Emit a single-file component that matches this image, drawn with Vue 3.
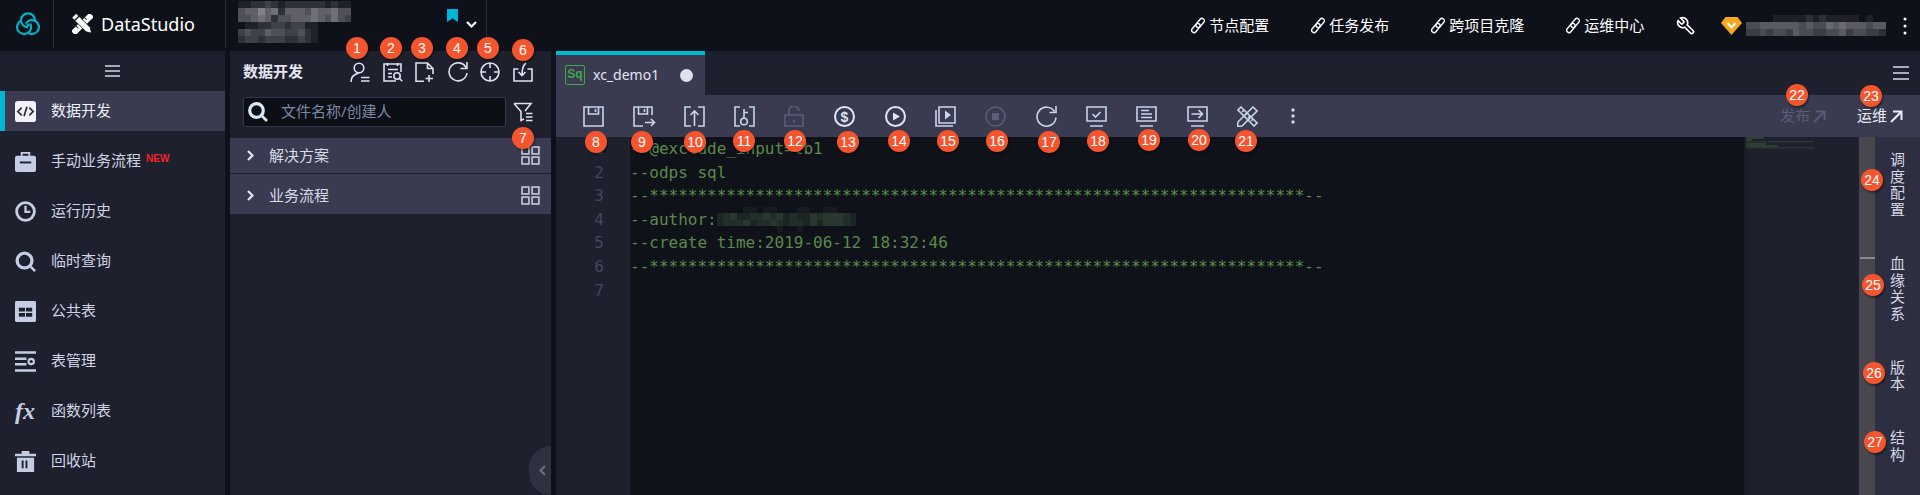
<script setup>
const navItems = [
  { label: '数据开发', icon: 'code', active: true },
  { label: '手动业务流程', icon: 'case', isNew: true },
  { label: '运行历史', icon: 'clock' },
  { label: '临时查询', icon: 'search' },
  { label: '公共表', icon: 'table' },
  { label: '表管理', icon: 'manage' },
  { label: '函数列表', icon: 'fx' },
  { label: '回收站', icon: 'trash' }
]
const links = ['节点配置', '任务发布', '跨项目克隆', '运维中心']
const sections = ['解决方案', '业务流程']
const sideTabs = ['调度配置', '血缘关系', '版本', '结构']
const stars = '*'.repeat(68)
const codeLines = [
  '--@exclude_input=tb1',
  '--odps sql',
  '--' + stars + '--',
  '--author:',
  '--create time:2019-06-12 18:32:46',
  '--' + stars + '--',
  ''
]
const badges = [
  [1, 357, 48], [2, 391, 48], [3, 422, 48], [4, 457, 48], [5, 488, 48], [6, 523, 50], [7, 523, 138],
  [8, 596, 142], [9, 642, 142], [10, 695, 142], [11, 744, 141], [12, 795, 141], [13, 848, 142],
  [14, 899, 141], [15, 948, 141], [16, 997, 141], [17, 1049, 142], [18, 1098, 141], [19, 1149, 140],
  [20, 1199, 140], [21, 1246, 141], [22, 1797, 95], [23, 1871, 96], [24, 1872, 180], [25, 1873, 285],
  [26, 1874, 373], [27, 1875, 442]
].map(([n, x, y]) => ({ n, left: x - 11 + 'px', top: y - 11 + 'px' }))

function mosaic(rows, base, tint) {
  return rows.flatMap(r => r.split('').map(ch => {
    const v = Number(ch) / 9
    const c = base.map((b, i) => Math.round(b + (tint[i] - b) * v))
    return `rgb(${c[0]},${c[1]},${c[2]})`
  }))
}
const gray = [14, 17, 25]
const projectCells = mosaic([
  '11223212222221211',
  '45575625554655644',
  '44565244555654643',
  '01122332331100000',
  '34335443342100000',
  '23323332232100000'
], gray, [160, 160, 165])
const userCells = mosaic([
  '000011111212111110100',
  '445555554544656555455',
  '334344354433445344332'
], gray, [150, 150, 155])
const authorCells = mosaic([
  '0000110110001100110000',
  '2342233434232243444320',
  '2333423343233242444320',
  '0000000001001000000000'
], gray, [75, 105, 72])
</script>

<template>
  <div class="app">
    <header class="topbar">
      <div class="logo-cell">
        <svg class="logo" viewBox="0 0 24 24" fill="none" stroke="#00b2cc" stroke-width="2.2">
          <g id="lobes">
            <path d="M12 15.300A7 7 0 1 1 19 8.300" />
            <path transform="rotate(120 12 12.800)" d="M12 15.300A7 7 0 1 1 19 8.300" />
            <path transform="rotate(240 12 12.800)" d="M12 15.300A7 7 0 1 1 19 8.300" />
          </g>
          <circle cx="12" cy="12.800" r="1.600" fill="#00b2cc" stroke="none" />
        </svg>
      </div>
      <div class="brand-cell">
        <svg class="brand-icon" viewBox="0 0 21 20">
          <g transform="rotate(45 10.5 10)">
            <rect x="7.5" y="-3" width="6" height="26" fill="#fff" />
            <path d="M7.5 4h3M7.5 8h3M7.5 12h3M7.5 16h3" stroke="#0e1119" stroke-width="1" />
          </g>
          <g transform="rotate(-45 10.5 10)">
            <path d="M7.5 -2h6v20l-3 5-3-5z" fill="#fff" stroke="#0e1119" stroke-width=".8" />
            <path d="M7.5 2h6" stroke="#0e1119" stroke-width="1.2" />
          </g>
        </svg>
        <span class="brand-name">DataStudio</span>
      </div>
      <div class="project-cell">
        <div class="mosaic project-mosaic">
          <i v-for="(c, i) in projectCells" :key="i" :style="{ background: c }"></i>
        </div>
        <svg class="bookmark" viewBox="0 0 11 13"><path d="M0 0h11v13L5.500 9.500 0 13z" fill="#00b4d8" /></svg>
        <svg class="proj-chevron" viewBox="0 0 11 7" fill="none" stroke="#fff" stroke-width="2.200"><path d="M1 1l4.500 4.500L10 1" /></svg>
      </div>
      <div class="top-right">
        <a v-for="l in links" :key="l" class="tlink">
          <svg class="clip" viewBox="0 0 14 18" fill="none" stroke="#fff" stroke-width="1.500">
            <g transform="rotate(40 7 9)">
              <rect x="4.500" y="0" width="5" height="11" rx="2.500" />
              <rect x="4.500" y="7" width="5" height="11" rx="2.500" />
            </g>
          </svg>
          <span class="tlink-text">{{ l }}</span>
        </a>
        <svg class="wrench" viewBox="0 0 24 24" fill="none" stroke="#fff" stroke-width="2">
          <path transform="translate(24 0) scale(-1 1)" d="M14.700 6.300a1 1 0 0 0 0 1.400l1.600 1.600a1 1 0 0 0 1.400 0l3.770-3.770a6 6 0 0 1-7.940 7.940l-6.910 6.910a2.120 2.120 0 0 1-3-3l6.910-6.910a6 6 0 0 1 7.940-7.940l-3.760 3.760z" />
        </svg>
        <svg class="gem" viewBox="0 0 21 18">
          <path d="M4.500 0h12L21 6 10.500 18 0 6z" fill="#f6a91f" />
          <path d="M6.500 6l4 4.500 4-4.500" fill="none" stroke="#fff" stroke-width="2" />
        </svg>
        <div class="mosaic user-mosaic">
          <i v-for="(c, i) in userCells" :key="i" :style="{ background: c }"></i>
        </div>
        <svg class="top-kebab" viewBox="0 0 4 18" fill="#fff">
          <circle cx="2" cy="2" r="1.500" /><circle cx="2" cy="9" r="1.500" /><circle cx="2" cy="16" r="1.500" />
        </svg>
      </div>
    </header>

    <div class="body">
      <nav class="nav">
        <div class="nav-head">
          <svg class="burger" viewBox="0 0 15 12" fill="none" stroke="#d4d8e6" stroke-width="1.600">
            <path d="M0 1h15M0 6h15M0 11h15" />
          </svg>
        </div>
        <ul class="nav-list">
          <li v-for="item in navItems" :key="item.label" class="nav-item" :class="{ active: item.active }">
            <span class="nav-icon">
              <svg v-if="item.icon === 'code'" viewBox="0 0 22 22">
                <rect width="22" height="22" rx="3" fill="#f0f2f8" />
                <path d="M7 7l-4 4 4 4M15 7l4 4-4 4M12.500 6l-3 10" fill="none" stroke="#2a2c3d" stroke-width="1.800" />
              </svg>
              <svg v-else-if="item.icon === 'case'" viewBox="0 0 22 22">
                <path d="M7 5V2h8v3" fill="none" stroke="#c5cde4" stroke-width="2" />
                <rect y="5" width="22" height="17" rx="2" fill="#c5cde4" />
                <path d="M5 12h12" stroke="#1e202d" stroke-width="2" />
              </svg>
              <svg v-else-if="item.icon === 'clock'" viewBox="0 0 22 22" fill="none" stroke="#c5cde4">
                <circle cx="11" cy="11" r="9.300" stroke-width="3" />
                <path d="M11 5v6.500h5" stroke-width="2.400" />
              </svg>
              <svg v-else-if="item.icon === 'search'" viewBox="0 0 22 22" fill="none" stroke="#c5cde4">
                <circle cx="10" cy="10" r="7.800" stroke-width="3.400" />
                <path d="M15.500 15.500l5.500 5.500" stroke-width="2.600" />
              </svg>
              <svg v-else-if="item.icon === 'table'" viewBox="0 0 22 22">
                <rect width="22" height="22" rx="1.500" fill="#c5cde4" />
                <path d="M4 7h6.500v4H4zM11.500 7H18v4h-6.500zM4 12.500h6.500v4H4zM11.500 12.500H18v4h-6.500z" fill="#1e202d" />
              </svg>
              <svg v-else-if="item.icon === 'manage'" viewBox="0 0 22 22" fill="none" stroke="#c5cde4">
                <path d="M0 1.500h22M0 20.500h22M0 8h12M0 14h12" stroke-width="2.600" />
                <circle cx="17" cy="11" r="2.800" stroke-width="2.200" />
              </svg>
              <span v-else-if="item.icon === 'fx'" class="fx">fx</span>
              <svg v-else viewBox="0 0 22 22">
                <path d="M0 3h22v2.500H0zM7 0h8v3H7z" fill="#c5cde4" />
                <path d="M2 7h18v15H2z" fill="#c5cde4" />
                <path d="M8 10v8M12 10v8M10 10v0" stroke="#1e202d" stroke-width="2" />
              </svg>
            </span>
            <span class="nav-label">{{ item.label }}</span>
            <span v-if="item.isNew" class="new-tag">NEW</span>
          </li>
        </ul>
      </nav>

      <section class="panel">
        <div class="panel-head">
          <h2 class="panel-title">数据开发</h2>
          <div class="panel-icons">
            <svg viewBox="0 0 20 20"><circle cx="9" cy="6" r="4.800" /><path d="M1 20c0-5 3.500-8 8-9M11 15.500h8.500M11 19h8.500" /></svg>
            <svg viewBox="0 0 20 20"><path d="M13 19H1V2h17v8M4.500 1v3M14.500 1v3M5 7.500h10M5 11.500h4M5 15h4" /><circle cx="14" cy="14" r="3.200" /><path d="M16.300 16.300l3 3" /></svg>
            <svg viewBox="0 0 20 20"><path d="M9 19.200H1V1h11.500L18 6.500v5.500M12.500 1v5.500H18M14 13v7M10.500 16.500h7.500" /></svg>
            <svg viewBox="0 0 20 20"><path d="M18 5.500A9 9 0 1 0 19 11M19 0v6.500h-6.500" /></svg>
            <svg viewBox="0 0 20 20"><circle cx="10" cy="10" r="9" /><path d="M10 1v5M10 14v5M1 10h5M14 10h5" /></svg>
            <svg viewBox="0 0 20 20"><path d="M5.500 7H1v12h18V7h-4.500M13 1c-3 2-4 5-4 12.500M5.500 10l3.500 3.500 3.500-3.500" /></svg>
          </div>
        </div>
        <div class="search-row">
          <div class="search-box">
            <svg class="search-ico" viewBox="0 0 20 20" fill="none" stroke="#d9e8f5">
              <circle cx="8.500" cy="8.500" r="6.800" stroke-width="3.200" />
              <path d="M13.500 13.500l5.500 5.500" stroke-width="2.600" />
            </svg>
            <span class="placeholder">文件名称/创建人</span>
          </div>
          <svg class="filter-ico" viewBox="0 0 20 20" fill="none" stroke="#dbe2f0" stroke-width="1.600">
            <path d="M1 1.500h17l-6 7.500M1 1.500l7 8v9l3-1.500M13 11.500h6.500M13 15h6.500M13 18.500h6.500" />
          </svg>
        </div>
        <div v-for="s in sections" :key="s" class="sec-row">
          <svg class="sec-chev" viewBox="0 0 7 11" fill="none" stroke="#e3e6f0" stroke-width="2.200"><path d="M1 1l4.500 4.500L1 10" /></svg>
          <span class="sec-label">{{ s }}</span>
          <svg class="sec-grid" viewBox="0 0 18 18" fill="none" stroke="#c0c4d6" stroke-width="1.600">
            <rect x="1" y="1" width="6.500" height="6.500" /><rect x="10.500" y="1" width="6.500" height="6.500" />
            <rect x="1" y="10.500" width="6.500" height="6.500" /><rect x="10.500" y="10.500" width="6.500" height="6.500" />
          </svg>
        </div>
        <div class="collapse-handle">
          <svg viewBox="0 0 7 11" fill="none" stroke="#6e7182" stroke-width="2"><path d="M6 1L1.500 5.500 6 10" /></svg>
        </div>
      </section>

      <main class="editor">
        <div class="tabstrip">
          <div class="tab">
            <span class="sq">Sq</span>
            <span class="tab-name">xc_demo1</span>
            <span class="tab-dot"></span>
          </div>
          <svg class="burger-right" viewBox="0 0 16 14" fill="none" stroke="#d4dcec" stroke-width="1.600">
            <path d="M0 1h16M0 7h16M0 13h16" />
          </svg>
        </div>
        <div class="toolbar">
          <svg viewBox="0 0 21 21"><path d="M1 1h19v19H1zM5.500 1v7h10V1M12.500 3v3" /></svg>
          <svg viewBox="0 0 21 21" class="wide"><path d="M19 9V1H1v19h9M5.500 1v7h9V1M11.500 3v3M12 16.500h9.500M18 13l3.500 3.500L18 20" /></svg>
          <svg viewBox="0 0 21 21"><path d="M7 1H1v19h6M14 1h6v19h-6M10.500 20V5M6.500 9l4-4 4 4" /></svg>
          <svg viewBox="0 0 21 21"><path d="M6 1H1v19h5M15 1h5v19h-5M10 12V3M10 6.500h4" /><circle cx="10" cy="15.500" r="3.300" /></svg>
          <svg viewBox="0 0 21 21" class="dim"><path d="M1 9h18v11H1zM5 9V5a5 5 0 0 1 10 0M10 13.500v3" /></svg>
          <svg viewBox="0 0 21 21" class="thick"><circle cx="10.500" cy="10.500" r="9.500" /><text x="10.500" y="15.500" text-anchor="middle" class="dollar">$</text></svg>
          <svg viewBox="0 0 21 21" class="thick"><circle cx="10.500" cy="10.500" r="9.500" /><path d="M8 6.500l7 4-7 4z" class="solid" /></svg>
          <svg viewBox="0 0 21 21"><path d="M1 4v16h17" /><path d="M4 1h16v16H4z" /><path d="M10 4.500l6 4.500-6 4.500z" class="solid" /></svg>
          <svg viewBox="0 0 21 21" class="dim"><circle cx="10.500" cy="10.500" r="9.500" /><path d="M7 7h7v7H7z" class="solid" /></svg>
          <svg viewBox="0 0 21 21"><path d="M18.500 5.500A9.500 9.500 0 1 0 20 11.500M20 0v6.500h-6.500" /></svg>
          <svg viewBox="0 0 21 21"><path d="M1 1h19v14H1zM4 20h13M6.500 8l3 3 5-5" /></svg>
          <svg viewBox="0 0 21 21"><path d="M1 1h19v14H1zM4 20h13M5 4.500h8M5 8h11M5 11.500h11" /></svg>
          <svg viewBox="0 0 21 21"><path d="M1 1h19v14H1zM4 20h13M4.500 8h11M11.500 4l4 4-4 4" /></svg>
          <svg viewBox="0 0 21 21"><path d="M4 1l16 16-3 3L1 4zM7 4l-2 2M10 7L8 9M13 10l-2 2M16 13l-2 2" /><path d="M16 1l4 4L5 20l-4.500 0.500L1 16z" /></svg>
          <svg class="tool-kebab" viewBox="0 0 12 16"><circle cx="6" cy="2" r="1.700" class="solid" /><circle cx="6" cy="8" r="1.700" class="solid" /><circle cx="6" cy="14" r="1.700" class="solid" /></svg>
          <div class="tool-right">
            <span class="tool-action disabled"><span class="ta-text">发布</span><svg viewBox="0 0 13 13"><path d="M1 12L11.500 1.500M3 1.500h8.500V10" /></svg></span>
            <span class="tool-action"><span class="ta-text">运维</span><svg viewBox="0 0 13 13"><path d="M1 12L11.500 1.500M3 1.500h8.500V10" /></svg></span>
          </div>
        </div>
        <div class="editor-body">
          <div class="gutter">
            <div v-for="(_, i) in codeLines" :key="i" class="ln">{{ i + 1 }}</div>
          </div>
          <div class="code">
            <div v-for="(line, i) in codeLines" :key="i" class="code-line">
              <span>{{ line }}</span>
              <div v-if="i === 3" class="mosaic author-mosaic">
                <i v-for="(c, j) in authorCells" :key="j" :style="{ background: c }"></i>
              </div>
            </div>
          </div>
          <div class="minimap">
            <svg viewBox="0 0 115 16" class="mini-svg">
              <path d="M2 1h18M2 3h6M2 7h20M2 9h32" stroke="#3f5f3b" stroke-width="1" />
              <path d="M2 4.800h68M2 10.800h68" stroke="#35493a" stroke-width=".8" />
            </svg>
          </div>
          <div class="scrollbar"><span class="scroll-mark"></span></div>
          <aside class="side">
            <div v-for="t in sideTabs" :key="t" class="side-tab">{{ t }}</div>
          </aside>
        </div>
      </main>
    </div>

    <span v-for="b in badges" :key="b.n" class="badge" :style="{ left: b.left, top: b.top }">{{ b.n }}</span>
  </div>
</template>

<style>
html, body { margin: 0; background: #0e1119; }
</style>

<style scoped>
.app {
  position: relative;
  width: 1920px;
  height: 495px;
  overflow: hidden;
  background: #0e1119;
  color: #d0d4e4;
  font-family: "Noto Sans", "Noto Sans CJK SC", sans-serif;
  font-size: 15px;
}
svg { display: block; }
.topbar { display: flex; align-items: center; height: 51px; background: #0e1119; }
.logo-cell { width: 54px; height: 48px; align-self: flex-start; border-right: 1px solid #2b2d3a; box-sizing: border-box; display: flex; align-items: center; justify-content: center; padding-left: 2px; }
.logo { width: 24px; height: 24px; }
.brand-cell { width: 172px; height: 48px; align-self: flex-start; border-right: 1px solid #2b2d3a; box-sizing: border-box; display: flex; align-items: center; padding-left: 18px; }
.brand-icon { width: 21px; height: 20px; flex: none; }
.brand-name { margin-left: 8px; font-size: 18px; color: #fff; }
.project-cell { width: 261px; height: 48px; align-self: flex-start; border-right: 1px solid #2b2d3a; box-sizing: border-box; display: flex; position: relative; padding-left: 12px; }
.mosaic { display: grid; flex: none; }
.mosaic i { display: block; }
.project-mosaic { grid-template-columns: repeat(17, 6.67px); grid-auto-rows: 7px; margin-top: 1px; height: 42px; }
.bookmark { width: 11px; height: 13px; margin-left: 96px; margin-top: 9px; flex: none; }
.proj-chevron { width: 11px; height: 7px; margin-left: 8px; margin-top: 21px; flex: none; }
.top-right { margin-left: auto; display: flex; align-items: center; padding-right: 13px; }
.tlink { display: flex; align-items: center; gap: 4px; color: #fff; font-size: 15px; margin-right: 42px; }
.tlink-text { margin-top: -2px; }
.tlink:last-of-type { margin-right: 0; }
.clip { width: 14px; height: 17px; flex: none; }
.wrench { width: 20px; height: 20px; margin-left: 32px; flex: none; }
.gem { width: 21px; height: 18px; margin-left: 25px; flex: none; }
.user-mosaic { grid-template-columns: repeat(21, 6.67px); grid-auto-rows: 7px; margin-left: 4px; }
.top-kebab { width: 4px; height: 18px; margin-left: 17px; flex: none; }

.body { display: flex; gap: 5px; height: 444px; }
.nav { width: 225px; background: #1e202d; flex: none; }
.nav-head { height: 40px; display: flex; align-items: center; justify-content: center; }
.burger { width: 15px; height: 12px; }
.nav-list { list-style: none; margin: 0; padding: 0; display: flex; flex-direction: column; gap: 10px; }
.nav-item { height: 40px; display: flex; align-items: center; padding-left: 14px; position: relative; }
.nav-item.active { background: #3a3b50; color: #eef0f7; }
.nav-item.active::before { content: ""; position: absolute; left: 0; top: 0; bottom: 0; width: 5px; background: #00b8d4; }
.nav-icon { width: 22px; height: 22px; flex: none; display: flex; align-items: center; justify-content: center; }
.nav-icon svg { width: 21px; height: 21px; }
.fx { font-family: "Liberation Serif", serif; font-style: italic; font-weight: 700; font-size: 24px; line-height: 22px; color: #c5cde4; }
.nav-label { margin-left: 15px; margin-top: -2px; font-size: 15px; line-height: 20px; }
.new-tag { font-family: "Liberation Sans", sans-serif; font-weight: 700; font-size: 10px; color: #f5222d; margin-left: 5px; margin-top: -6px; }

.panel { width: 321px; flex: none; background: #1e202d; position: relative; }
.panel-head { height: 42px; display: flex; align-items: center; padding: 0 18.5px 0 13px; }
.panel-title { margin: -3px 0 0; font-size: 15px; font-weight: 700; color: #e4e7f0; }
.panel-icons { margin-left: auto; display: flex; gap: 12.5px; }
.panel-icons svg { width: 20px; height: 20px; fill: none; stroke: #dbe2f0; stroke-width: 1.6; }
.search-row { display: flex; align-items: center; gap: 7px; margin: 4px 0 11px 13px; }
.search-box { width: 263px; height: 30px; box-sizing: border-box; border: 1px solid #33364a; border-radius: 3px; background: #0d0f17; display: flex; align-items: center; padding-left: 4px; }
.search-ico { width: 20px; height: 20px; flex: none; }
.placeholder { margin-left: 13px; margin-top: -3px; color: #7d88a4; font-size: 15px; }
.filter-ico { width: 20px; height: 20px; flex: none; }
.sec-row { display: flex; align-items: center; background: #3a3b50; padding: 0 11.5px 0 17px; }
.sec-row:nth-of-type(3) { height: 35px; margin-bottom: 1px; }
.sec-row:nth-of-type(4) { height: 40px; padding-top: 3px; box-sizing: border-box; }
.sec-chev { width: 7px; height: 11px; flex: none; }
.sec-label { margin-left: 15px; margin-top: -3px; color: #d8dbe8; }
.sec-grid { width: 19px; height: 19px; margin-left: auto; flex: none; }
.collapse-handle { position: absolute; right: 0; bottom: 0; width: 22px; height: 49px; background: #2f3140; border-radius: 22px 0 0 22px; display: flex; align-items: center; justify-content: center; padding-left: 4px; box-sizing: border-box; }
.collapse-handle svg { width: 7px; height: 11px; }

.editor { flex: 1; display: flex; flex-direction: column; min-width: 0; }
.tabstrip { height: 44px; background: #1e202d; display: flex; align-items: stretch; position: relative; }
.tab { width: 149px; box-sizing: border-box; border-top: 4px solid #00b8d4; background: #3a3b50; display: flex; align-items: center; padding-left: 9px; }
.sq { width: 20px; height: 20px; box-sizing: border-box; border: 1.5px solid #3ea84a; border-radius: 2px; color: #3ea84a; font: 700 12px/17px "Liberation Sans", sans-serif; text-align: center; flex: none; }
.tab-name { margin-left: 8px; margin-top: -2px; font-size: 14px; color: #e3e6f0; }
.tab-dot { width: 13px; height: 13px; border-radius: 50%; background: #dde3f0; margin-left: 21px; flex: none; }
.burger-right { width: 16px; height: 14px; margin-left: auto; margin-right: 11px; align-self: center; }
.toolbar { height: 42px; background: #3a3b50; display: flex; align-items: center; padding: 0 17px 0 27px; gap: 29.3px; color: #c9d5ea; }
.toolbar > svg { width: 21px; height: 21px; flex: none; fill: none; stroke: #c9d5ea; stroke-width: 1.6; }
.toolbar > svg.wide { overflow: visible; }
.toolbar > svg.thick { stroke-width: 2; color: #dfe5f2; stroke: #dfe5f2; }
.toolbar > svg.dim { stroke: #5a5e79; }
.toolbar .solid { fill: currentColor; stroke: none; }
.toolbar > svg.dim .solid { fill: #5a5e79; }
.toolbar .dollar { font: 700 14px "Liberation Sans", sans-serif; fill: #dfe5f2; stroke: none; }
.toolbar > svg.tool-kebab { width: 12px; height: 16px; }
.tool-right { margin-left: auto; display: flex; gap: 31px; }
.tool-action { display: flex; align-items: center; gap: 3px; font-size: 15px; color: #e8ecf5; }
.ta-text { margin-top: -3px; }
.tool-action svg { width: 13px; height: 13px; fill: none; stroke: #e8ecf5; stroke-width: 2; }
.tool-action.disabled { color: #585c77; }
.tool-action.disabled svg { stroke: #585c77; }
.editor-body { flex: 1; display: flex; min-height: 0; font-family: "DejaVu Sans Mono", monospace; font-size: 16px; }
.gutter { width: 74px; flex: none; background: #1e202d; color: #44465e; text-align: right; }
.ln { height: 23.6px; line-height: 23.6px; padding-right: 26px; }
.code { flex: 1; background: #0f1219; color: #5a8a4c; }
.code-line { height: 23.6px; line-height: 23.6px; display: flex; align-items: center; white-space: pre; }
.author-mosaic { grid-template-columns: repeat(22, 6.67px); grid-auto-rows: 6.25px; margin-left: 0; }
.minimap { width: 115px; flex: none; background: linear-gradient(90deg, #1a1c28, #1e202d 10px); }
.mini-svg { width: 115px; height: 16px; }
.scrollbar { width: 16px; flex: none; background: #47474d; position: relative; }
.scroll-mark { position: absolute; left: 1px; right: 0; top: 120px; height: 2px; background: #8a8a8e; }
.side { width: 45px; flex: none; background: #2d2f40; display: flex; flex-direction: column; gap: 37px; padding: 14px 0 0 15px; box-sizing: border-box; color: #d4d7e4; }
.side-tab { width: 15px; font-family: "Noto Sans CJK SC", sans-serif; font-size: 15px; line-height: 16.7px; }

.badge { position: absolute; width: 22px; height: 22px; border-radius: 50%; background: #f4552f; color: #fff; font: 14px/22px "Liberation Sans", sans-serif; text-align: center; box-shadow: 1px 2px 2px rgba(0, 0, 0, .4); }
</style>
